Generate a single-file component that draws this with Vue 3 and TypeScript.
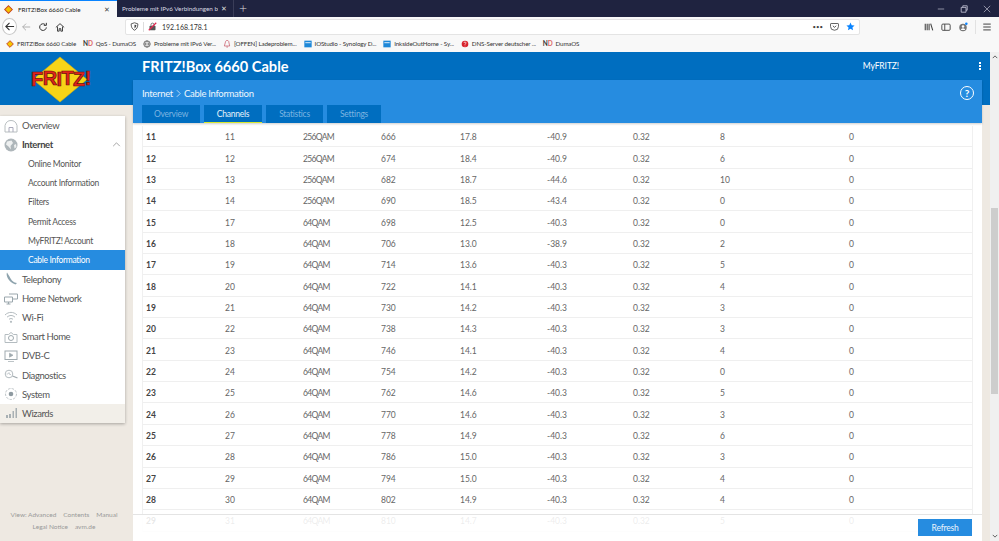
<script setup lang="ts">
interface Row { id: number; ch: number; mod: string; freq: number; mer: string; lvl: string; lat: string; cor: number; unc: number }
const raw: [number, number, string, number, string, string, number][] = [
  [11, 11, '256QAM', 666, '17.8', '-40.9', 8],
  [12, 12, '256QAM', 674, '18.4', '-40.9', 6],
  [13, 13, '256QAM', 682, '18.7', '-44.6', 10],
  [14, 14, '256QAM', 690, '18.5', '-43.4', 0],
  [15, 17, '64QAM', 698, '12.5', '-40.3', 0],
  [16, 18, '64QAM', 706, '13.0', '-38.9', 2],
  [17, 19, '64QAM', 714, '13.6', '-40.3', 5],
  [18, 20, '64QAM', 722, '14.1', '-40.3', 4],
  [19, 21, '64QAM', 730, '14.2', '-40.3', 3],
  [20, 22, '64QAM', 738, '14.3', '-40.3', 3],
  [21, 23, '64QAM', 746, '14.1', '-40.3', 4],
  [22, 24, '64QAM', 754, '14.2', '-40.3', 0],
  [23, 25, '64QAM', 762, '14.6', '-40.3', 5],
  [24, 26, '64QAM', 770, '14.6', '-40.3', 3],
  [25, 27, '64QAM', 778, '14.9', '-40.3', 6],
  [26, 28, '64QAM', 786, '15.0', '-40.3', 3],
  [27, 29, '64QAM', 794, '15.0', '-40.3', 4],
  [28, 30, '64QAM', 802, '14.9', '-40.3', 4],
  [29, 31, '64QAM', 810, '14.7', '-40.3', 5],
]
const rows: Row[] = raw.map(r => ({ id: r[0], ch: r[1], mod: r[2], freq: r[3], mer: r[4], lvl: r[5], lat: '0.32', cor: r[6], unc: 0 }))
const subItems = ['Online Monitor', 'Account Information', 'Filters', 'Permit Access', 'MyFRITZ! Account']
const lowerItems = ['Telephony', 'Home Network', 'Wi-Fi', 'Smart Home', 'DVB-C', 'Diagnostics', 'System']
const tabs = ['Overview', 'Channels', 'Statistics', 'Settings']
const bookmarks = ['QoS - DumaOS', 'Probleme mit IPv6 Ver...', '[OFFEN] Ladeproblem...', 'IOStudio - Synology D...', 'InksideOutHome - Sy...', 'DNS-Server deutscher ...', 'DumaOS']
</script>

<template>
  <div class="root">
    <div class="tabbar">
      <div class="btab active">
        <svg class="fav" viewBox="0 0 12 12"><path d="M6 1 11 6 6 11 1 6Z" fill="#f5c400" stroke="#c8421e" stroke-width="1.4"/></svg>
        <span class="btitle">FRITZ!Box 6660 Cable</span>
        <span class="bx">✕</span>
      </div>
      <div class="btab second">
        <span class="btitle light">Probleme mit IPv6 Verbindungen b</span>
        <span class="bx light">✕</span>
      </div>
      <span class="plus">+</span>
      <div class="winctl">
        <svg viewBox="0 0 10 10"><path d="M1 5H9" stroke="#aab" stroke-width="1"/></svg>
        <svg viewBox="0 0 10 10"><path d="M1.5 3h6v6h-6zM3.5 3V1h5.5v5.5H7.5" fill="none" stroke="#ccd" stroke-width="1"/></svg>
        <svg viewBox="0 0 10 10"><path d="M1 1 9 9M9 1 1 9" stroke="#aab" stroke-width="1"/></svg>
      </div>
    </div>

    <div class="toolbar">
      <div class="back"><svg viewBox="0 0 12 12"><path d="M11 6H2M6 2 2 6l4 4" fill="none" stroke="#333" stroke-width="1.2"/></svg></div>
      <svg class="tico" viewBox="0 0 12 12"><path d="M11 6H2M6 2 2 6l4 4" fill="none" stroke="#aaa" stroke-width="1.1"/></svg>
      <svg class="tico" viewBox="0 0 12 12"><path d="M10 6.5A4 4 0 1 1 8.5 3M10 1v3H7" fill="none" stroke="#333" stroke-width="1.2"/></svg>
      <svg class="tico" viewBox="0 0 12 12"><path d="M1 6.5 6 2l5 4.5M3 5.5V11h2V8h2v3h2V5.5" fill="none" stroke="#333" stroke-width="1.1"/></svg>
      <div class="url">
        <svg class="uico" viewBox="0 0 12 12"><path d="M6 1 10.5 2.5C10.5 7 9 9.500 6 11 3 9.500 1.500 7 1.500 2.500Z" fill="none" stroke="#444" stroke-width="1.1"/><path d="M6 3.500 8.500 4C8.300 6.500 7.500 7.500 6 8.500Z" fill="#444"/></svg>
        <span class="usep"></span>
        <svg class="uico" viewBox="0 0 12 12"><rect x="2" y="5" width="8" height="6" rx="1" fill="#555"/><path d="M4 5V3.500a2 2 0 0 1 4 0V5" fill="none" stroke="#555"/><path d="M1 11 11 1" stroke="#e22850" stroke-width="1.6"/></svg>
        <span class="addr">192.168.178.1</span>
        <span class="udots">•••</span>
        <svg class="uico" viewBox="0 0 12 12"><path d="M1.500 2h9a.8.8 0 0 1 .8.8V6a5.300 5 0 0 1-10.600 0V2.800A.8.8 0 0 1 1.500 2Z" fill="none" stroke="#444" stroke-width="1.1"/><path d="M3.800 5 6 7.200 8.200 5" fill="none" stroke="#444" stroke-width="1.2"/></svg>
        <svg class="uico star" viewBox="0 0 12 12"><path d="M6 .8 7.600 4.300 11.400 4.700 8.600 7.300 9.400 11.100 6 9.100 2.600 11.100 3.400 7.300 .6 4.700 4.400 4.300Z" fill="#0a84ff"/></svg>
      </div>
      <div class="tright">
        <svg class="rico" viewBox="0 0 12 12"><path d="M1.500 2v8M3.800 2v8M6.100 2v8M8 2l2.500 8" fill="none" stroke="#444" stroke-width="1.3"/></svg>
        <svg class="rico" viewBox="0 0 12 12"><rect x="1" y="2.500" width="10" height="7.500" rx="1.300" fill="none" stroke="#444" stroke-width="1.1"/><path d="M4.500 2.500v7.500" stroke="#444" stroke-width="1.1"/></svg>
        <svg class="rico" viewBox="0 0 12 12"><circle cx="6" cy="6.500" r="4.500" fill="#777"/><circle cx="6" cy="5.300" r="1.500" fill="#fff"/><path d="M3.500 9.500a2.500 2 0 0 1 5 0" fill="#fff"/><circle cx="10" cy="2" r="1.500" fill="#0a84ff"/></svg>
        <span class="tsep"></span>
        <svg class="rico" viewBox="0 0 12 12"><path d="M1.500 2.500h9M1.500 6h9M1.500 9.500h9" stroke="#444" stroke-width="1.2"/></svg>
      </div>
    </div>

    <div class="bookbar">
      <span class="bm">
        <svg class="bfav" viewBox="0 0 12 12"><path d="M6 1 11 6 6 11 1 6Z" fill="#f5c400" stroke="#c8421e" stroke-width="1.4"/></svg>FRITZ!Box 6660 Cable
      </span>
      <span v-for="(b, i) in bookmarks" :key="b" class="bm">
        <span v-if="i === 0 || i === 6" class="nd">N<em>D</em></span>
        <svg v-else-if="i === 1" class="bfav" viewBox="0 0 12 12"><circle cx="6" cy="6" r="4.800" fill="none" stroke="#444" stroke-width="1.100"/><path d="M1.200 6h9.600M6 1.200c-3 3-3 6.600 0 9.600M6 1.200c3 3 3 6.600 0 9.600" fill="none" stroke="#444" stroke-width=".8"/></svg>
        <svg v-else-if="i === 2" class="bfav" viewBox="0 0 12 12"><path d="M4 2a2.500 2.500 0 0 1 4.500 0L10 9H2ZM5 10.500h2.500" fill="none" stroke="#c85a6a" stroke-width="1.100"/></svg>
        <svg v-else-if="i === 3 || i === 4" class="bfav" viewBox="0 0 12 12"><rect x=".5" y="1" width="11" height="10" fill="#1e88d8"/><path d="M2 4h8" stroke="#cfe6fa" stroke-width="1.600"/></svg>
        <svg v-else class="bfav" viewBox="0 0 12 12"><circle cx="6" cy="6" r="5" fill="#d8222c"/><path d="M4.500 4.500a1.500 1.500 0 1 1 2 1.400c-.5.200-.5.600-.5 1.100" fill="none" stroke="#fff" stroke-width="1.100"/><circle cx="6" cy="9" r=".7" fill="#fff"/></svg>
        {{ b }}
      </span>
    </div>

    <div class="page">
      <aside class="left">
        <div class="logo">
          <svg viewBox="0 0 64 48" class="logosvg">
            <path d="M29 0 56 22.500 29 45 2 22.500Z" fill="#f7d417" stroke="#dcb20c" stroke-width=".6"/>
            <text x="0" y="29" dy="0 -1 1 -1 1 -1" class="logotext">FRITZ!</text>
          </svg>
        </div>
        <nav class="menu">
          <div class="mi">
            <svg class="mico" viewBox="0 0 14 14"><path d="M1 6.500C2 3 4 1.500 7 1.500S12 3 13 6.500V13H1Z" fill="none" stroke="#b8bec0" stroke-width="1"/><path d="M5 13V8.500h4V13" fill="none" stroke="#aab" stroke-width="1"/></svg>
            Overview
          </div>
          <div class="mi strong">
            <svg class="mico" viewBox="0 0 14 14"><circle cx="7" cy="7" r="6.500" fill="#aeb6ba"/><path d="M3 3.500 7.500 2.500 9 5 6.500 8 7 11.500 4.500 8.500 2 6.500ZM10 7l2-1 .5 3-2 1.500Z" fill="#eef0f0"/></svg>
            Internet
            <svg class="chev" viewBox="0 0 10 6"><path d="M1 5 5 1l4 4" fill="none" stroke="#888" stroke-width=".9"/></svg>
          </div>
          <div v-for="s in subItems" :key="s" class="si">{{ s }}</div>
          <div class="si cur">Cable Information</div>
          <div v-for="(item, i) in lowerItems" :key="item" class="mi">
            <svg v-if="i === 0" class="mico" viewBox="0 0 14 14"><path d="M3 .5C1.800 3 3.500 9.500 11.500 12.500L13 11C10 10.500 7.500 9 5.500 4.500Z" fill="#8ea3ad"/></svg>
            <svg v-else-if="i === 1" class="mico" viewBox="0 0 14 14"><path d="M.500 6h8v5h-8ZM5 3h8.500v5H9M2.500 13h4M4.500 11v2" fill="none" stroke="#9aa6ac" stroke-width="1"/></svg>
            <svg v-else-if="i === 2" class="mico" viewBox="0 0 14 14"><path d="M1 5c3.500-3.500 8.500-3.500 12 0M3 7.200c2.500-2.300 5.500-2.300 8 0M5 9.300c1.300-1 2.700-1 4 0" fill="none" stroke="#b4bcc0" stroke-width="1"/><circle cx="7" cy="11.800" r="1.100" fill="#b4bcc0"/></svg>
            <svg v-else-if="i === 3" class="mico" viewBox="0 0 14 14"><path d="M1 4.500h3.500L7 2.500 9.500 4.500H13V12.500H1Z" fill="none" stroke="#b4bcc0" stroke-width="1"/><circle cx="7" cy="8" r="2.500" fill="none" stroke="#a0aaaf" stroke-width="1"/></svg>
            <svg v-else-if="i === 4" class="mico" viewBox="0 0 14 14"><rect x="1" y="2" width="12" height="8.500" fill="none" stroke="#a0aaaf"/><path d="M5.500 4.200 9 6.200 5.500 8.200ZM4 12.500h6" fill="#a0aaaf" stroke="#a0aaaf" stroke-width=".7"/></svg>
            <svg v-else-if="i === 5" class="mico" viewBox="0 0 14 14"><circle cx="5" cy="6" r="3.800" fill="none" stroke="#b4bcc0"/><path d="M8.500 8 13.500 10" stroke="#a0aaaf" stroke-width="1.300"/><path d="M2.500 6h1.500l1-1.500L6 7l1-1" fill="none" stroke="#b4bcc0" stroke-width=".7"/></svg>
            <svg v-else class="mico" viewBox="0 0 14 14"><circle cx="7" cy="7" r="5.500" fill="none" stroke="#c0c6c9" stroke-dasharray="2.500 1.200"/><circle cx="7" cy="7" r="2.300" fill="#8e9aa0"/></svg>
            {{ item }}
          </div>
          <div class="mi wiz">
            <svg class="mico" viewBox="0 0 14 14"><path d="M2 9h2v3H2ZM5 8h2v4H5ZM8.500 5h1.500v7H8.500ZM11.500 2h1.500v10h-1.500Z" fill="#a8b0b3"/></svg>
            Wizards
          </div>
        </nav>
        <div class="foot">
          <div><span>View: Advanced</span><span>Contents</span><span>Manual</span></div>
          <div><span>Legal Notice</span><span>avm.de</span></div>
        </div>
      </aside>

      <main class="main">
        <div class="titlebar">
          <span class="ptitle">FRITZ!Box 6660 Cable</span>
          <span class="myfritz">MyFRITZ!</span>
          <span class="kebab"><i></i><i></i><i></i></span>
        </div>
        <div class="sub">
          <div class="crumb">
            <span>Internet</span>
            <svg class="crumbsep" viewBox="0 0 6 10"><path d="M1 1 5 5 1 9" fill="none" stroke="#e8f2fb" stroke-width=".9"/></svg>
            <span>Cable Information</span>
            <span class="help">?</span>
          </div>
          <div class="subtabs">
            <span v-for="t in tabs" :key="t" class="stab" :class="[t.toLowerCase(), { on: t === 'Channels' }]">{{ t }}</span>
          </div>
        </div>
        <div class="panel">
          <div class="table">
            <div v-for="r in rows" :key="r.id" class="row">
              <b>{{ r.id }}</b><span>{{ r.ch }}</span><span class="mod">{{ r.mod }}</span><span>{{ r.freq }}</span><span>{{ r.mer }}</span><span>{{ r.lvl }}</span><span>{{ r.lat }}</span><span>{{ r.cor }}</span><span>{{ r.unc }}</span>
            </div>
          </div>
          <div class="actions"><button class="refresh">Refresh</button></div>
        </div>
      </main>

      <div class="scroll">
        <svg class="arrow" viewBox="0 0 8 5"><path d="M1 4 4 1l3 3" fill="none" stroke="#444" stroke-width="1.100"/></svg>
        <div class="track"><div class="thumb"></div></div>
        <svg class="arrow" viewBox="0 0 8 5"><path d="M1 1l3 3 3-3" fill="none" stroke="#444" stroke-width="1.100"/></svg>
      </div>
    </div>
  </div>
</template>

<style>
html, body { margin: 0; height: 100%; overflow: hidden; }
</style>

<style scoped>
.root { width: 999px; height: 541px; display: flex; flex-direction: column; overflow: hidden; font-family: Lato, "Open Sans", sans-serif; font-size: 9px; }
.tabbar { height: 17px; background: #1f2340; display: flex; align-items: stretch; flex: none; color: #fff; }
.btab { width: 117px; display: flex; align-items: center; padding: 0 7px 0 4px; box-sizing: border-box; gap: 3px; }
.btab.active { background: #f8f8f8; color: #222; border-top: 1px solid #0a84ff; }
.btab.second { border-right: 1px solid #3a3d58; padding: 0 6px 0 5px; }
.fav { width: 9px; height: 9px; margin-right: 2px; flex: none; }
.btitle { flex: 1; min-width: 0; white-space: nowrap; overflow: hidden; font-size: 6.300px; }
.btitle.light { color: #d8d8e0; }
.bx { font-size: 7px; color: #444; flex: none; }
.bx.light { color: #ddd; }
.plus { font-size: 14px; line-height: 16px; padding: 0 5px; color: #ddd; font-weight: 300; }
.winctl { margin-left: auto; display: flex; align-items: center; gap: 15px; padding-right: 8px; }
.winctl svg { width: 8px; height: 8px; }
.toolbar { height: 19px; background: #f8f8f8; display: flex; align-items: center; flex: none; padding-left: 2px; box-sizing: border-box; }
.back { width: 17px; height: 17px; border-radius: 50%; border: 1px solid #c8c8c8; background: #fff; display: flex; align-items: center; justify-content: center; box-sizing: border-box; margin-right: 4px; }
.back svg { width: 11px; height: 11px; }
.tico { width: 10px; height: 10px; margin-right: 7px; flex: none; }
.url { margin-left: 53px; width: 735px; height: 16px; background: #fff; border: 1px solid #e4e4e4; border-radius: 2px; box-sizing: border-box; display: flex; align-items: center; padding: 0 4px; gap: 3px; flex: none; }
.uico { width: 9px; height: 9px; flex: none; }
.usep { width: 1px; height: 10px; background: #ddd; margin: 0 1px; }
.addr { font-size: 7px; color: #333; margin-left: 2px; flex: 1; }
.udots { font-size: 6px; color: #444; margin-right: 4px; }
.star { margin-left: 4px; }
.tright { margin-left: 64px; display: flex; align-items: center; }
.rico { width: 10px; height: 10px; margin-right: 7px; flex: none; }
.tsep { width: 1px; height: 14px; background: #e2e2e2; margin: 0 6px 0 0; }
.bookbar { height: 16px; background: #f8f8f8; display: flex; align-items: center; flex: none; padding: 0 0 1px 6px; gap: 7px; color: #333; font-size: 6.200px; letter-spacing: -.12px; white-space: nowrap; box-sizing: border-box; }
.bm { display: inline-flex; align-items: center; gap: 3px; }
.bfav { width: 8px; height: 8px; flex: none; }
.nd { font-size: 6.500px; font-weight: 700; color: #333; }
.nd em { font-style: normal; color: #d66; }

.page { flex: 1; min-height: 0; display: flex; background: linear-gradient(#006ec0 53px, #eee9e2 53px); color: #555; }
.left { width: 133px; flex: none; display: flex; flex-direction: column; }
.logo { height: 53px; flex: none; padding: 5px 0 0 31px; box-sizing: border-box; }
.logosvg { width: 64px; height: 48px; display: block; overflow: visible; }
.logotext { font-family: "Liberation Sans", sans-serif; font-weight: 700; font-size: 20px; fill: #e2231a; stroke: #6b100b; stroke-width: .7px; letter-spacing: -.6px; }
.menu { margin-top: 11px; width: 125px; background: #fff; box-shadow: 0 1px 3px rgba(0,0,0,.3); display: flex; flex-direction: column; }
.mi, .si { height: 19.200px; display: flex; align-items: center; white-space: nowrap; }
.mi { font-size: 9.500px; letter-spacing: -.4px; color: #555; padding-left: 4px; gap: 4px; position: relative; }
.mi.strong { font-weight: 700; color: #444; }
.mico { width: 14px; height: 14px; flex: none; }
.chev { position: absolute; right: 4px; top: 7px; width: 9px; height: 5px; }
.si { padding-left: 28px; font-size: 8.500px; letter-spacing: -.3px; color: #555; }
.si.cur { background: #268ce0; color: #fff; }
.wiz { background: #f2efe9; }
.foot { margin-top: auto; padding-bottom: 8px; font-size: 6.500px; color: #999; text-align: center; width: 128px; line-height: 12px; white-space: nowrap; }
.foot span { margin: 0 3.500px; }

.main { flex: 1; min-width: 0; display: flex; flex-direction: column; }
.titlebar { height: 28px; flex: none; display: flex; align-items: center; color: #fff; padding-left: 9px; box-sizing: border-box; }
.ptitle { font-size: 14.600px; font-weight: 700; }
.myfritz { margin-left: auto; font-size: 8.500px; letter-spacing: -.1px; margin-right: 80px; }
.kebab { display: flex; flex-direction: column; gap: 1px; margin-right: 9px; }
.kebab i { width: 2px; height: 2px; background: #fff; display: block; }
.sub { height: 43px; flex: none; margin-right: 8px; background: #268ce0; padding-left: 9px; box-sizing: border-box; position: relative; z-index: 2; box-shadow: 0 1px 2px rgba(0,0,0,.2); display: flex; flex-direction: column; }
.crumb { height: 25px; display: flex; align-items: center; gap: 3px; color: #eef6fd; font-size: 9.500px; letter-spacing: -.3px; padding: 1px 8px 0 0; box-sizing: border-box; }
.crumbsep { width: 5px; height: 9px; }
.help { margin-left: auto; width: 14px; height: 14px; border: 1.200px solid #fff; border-radius: 50%; display: flex; align-items: center; justify-content: center; font-weight: 700; font-size: 10px; color: #fff; box-sizing: border-box; }
.subtabs { display: flex; gap: 4px; height: 18px; }
.stab { width: 58px; height: 18px; background: #006ec0; color: #7cb4e0; font-size: 8.500px; letter-spacing: -.25px; display: flex; align-items: center; justify-content: center; box-sizing: border-box; }
.stab.statistics { width: 57px; }
.stab.settings { width: 54px; }
.stab.on { color: #e8f3fb; border-bottom: 1px solid #d8e830; }
.panel { flex: 1; min-height: 0; margin-right: 8px; background: #fff; position: relative; padding: 3px 9px 0; overflow: hidden; }
.table { display: flex; flex-direction: column; border-left: 1px solid #f0f0f0; border-right: 1px solid #f0f0f0; }
.row { height: 21.350px; flex: none; display: grid; grid-template-columns: 79px 78px 78px 79px 87px 86px 87px 129px 1fr; align-items: center; padding: 2px 0 0 3px; box-sizing: border-box; border-bottom: 1px solid #efefef; color: #666; font-size: 8.500px; }
.row b { color: #444; }
.mod { letter-spacing: -.7px; }
.actions { position: absolute; left: 0; right: 0; bottom: 0; height: 27px; background: rgba(255,255,255,.88); border-top: 1px solid #e4e4e4; box-sizing: border-box; display: flex; justify-content: flex-end; align-items: flex-start; padding: 4px 10px 0 0; }
.refresh { width: 54px; height: 17px; background: #268ce0; color: #eaf4fc; border: 0; padding: 0; font: inherit; font-size: 8.500px; letter-spacing: -.2px; }
.scroll { width: 9px; flex: none; background: #f0f0f0; display: flex; flex-direction: column; align-items: center; }
.arrow { width: 6px; height: 4px; flex: none; margin: 3px 0; }
.track { flex: 1; width: 7px; padding-top: 146px; box-sizing: border-box; }
.thumb { height: 186px; background: #cdcdcd; }
</style>
